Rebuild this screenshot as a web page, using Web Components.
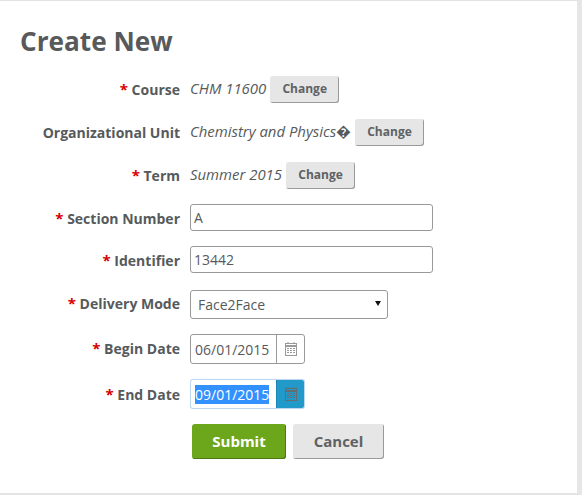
<!DOCTYPE html>
<html>
<head>
<meta charset="utf-8">
<title>Create New</title>
<style>
  html, body { margin: 0; padding: 0; background: #fff; }
  body { font-family: "Open Sans", "Liberation Sans", sans-serif; color: #565a5c; }
</style>
</head>
<body>
<create-page>
  <form-row label="Course" required style="--row-h:27px;--after:16px;--shift:-1px">
    <static-value>CHM 11600</static-value><plain-button>Change</plain-button>
  </form-row>
  <form-row label="Organizational Unit" style="--row-h:27px;--after:16px">
    <static-value>Chemistry and Physics&#xFFFD;</static-value><plain-button>Change</plain-button>
  </form-row>
  <form-row label="Term" required style="--row-h:27px;--after:15px;--shift:-1px">
    <static-value>Summer 2015</static-value><plain-button>Change</plain-button>
  </form-row>
  <form-row label="Section Number" required style="--row-h:27px;--after:15px">
    <text-box value="A"></text-box>
  </form-row>
  <form-row label="Identifier" required style="--row-h:27px;--after:17px">
    <text-box value="13442"></text-box>
  </form-row>
  <form-row label="Delivery Mode" required style="--row-h:29px;--after:15px;--shift:-3px">
    <select-box value="Face2Face"></select-box>
  </form-row>
  <form-row label="Begin Date" required style="--row-h:30px;--after:15px;--shift:-2px">
    <date-box value="06/01/2015"></date-box>
  </form-row>
  <form-row label="End Date" required style="--row-h:30px;--after:15px;--shift:-1px">
    <date-box value="09/01/2015" active></date-box>
  </form-row>
  <form-row style="--row-h:35px;--after:0px">
    <action-button primary>Submit</action-button><action-button>Cancel</action-button>
  </form-row>
</create-page>

<script>
// page frame with the heading
class CreatePage extends HTMLElement {
  constructor() {
    super();
    this.attachShadow({ mode: "open" });
    this.shadowRoot.innerHTML = `
    <style>
      :host {
        display: block;
        box-sizing: border-box;
        width: 582px;
        height: 495px;
        border-top: 1px solid #e3e3e3;
        border-right: 5px solid #e6e6e6;
        border-bottom: 2px solid #e3e3e3;
        padding: 22px 0 0 20px;
      }
      h1 {
        margin: 0 0 17px;
        height: 36px;
        line-height: 36px;
        font-size: 26.2px;
        font-weight: 700;
        color: #58595b;
      }
    </style>
    <h1>Create New</h1>
    <slot></slot>`;
  }
}

// label on the left, whatever is slotted on the right
class FormRow extends HTMLElement {
  constructor() {
    super();
    this.attachShadow({ mode: "open" });
    const label = this.getAttribute("label") || "";
    const star = this.hasAttribute("required") ? `<span class="star">*</span> ` : "";
    this.shadowRoot.innerHTML = `
    <style>
      :host {
        display: flex;
        align-items: center;
        height: var(--row-h);
        margin-bottom: var(--after);
      }
      .label {
        width: 160px;
        margin: var(--shift, 0px) 10px 0 0;
        flex: none;
        text-align: right;
        font-size: 14px;
        font-weight: 700;
        white-space: nowrap;
        color: #565a5c;
      }
      .star { color: #d40000; font-size: 15px; }
      .value { display: flex; align-items: center; height: 100%; }
    </style>
    <div class="label">${star}${label}</div>
    <div class="value"><slot></slot></div>`;
  }
}

class StaticValue extends HTMLElement {
  constructor() {
    super();
    this.attachShadow({ mode: "open" });
    this.shadowRoot.innerHTML = `
    <style>
      :host {
        display: block;
        margin: -4px 4px 0 0;
        font-size: 14.9px;
        font-style: italic;
        white-space: nowrap;
        color: #565a5c;
      }
    </style>
    <slot></slot>`;
  }
}

class PlainButton extends HTMLElement {
  constructor() {
    super();
    this.attachShadow({ mode: "open" });
    this.shadowRoot.innerHTML = `
    <style>
      :host {
        display: flex;
        align-items: center;
        justify-content: center;
        box-sizing: border-box;
        width: 69px;
        height: 27px;
        padding-bottom: 2px;
        background: #e6e6e6;
        border-radius: 3px;
        box-shadow: inset -1px -1px 0 #9a9a9a;
        font-size: 12px;
        font-weight: 700;
        color: #5f6264;
      }
    </style>
    <slot></slot>`;
  }
}

class TextBox extends HTMLElement {
  constructor() {
    super();
    this.attachShadow({ mode: "open" });
    this.shadowRoot.innerHTML = `
    <style>
      :host { display: block; width: 243px; height: 27px; }
      input {
        box-sizing: border-box;
        width: 100%;
        height: 100%;
        margin: 0;
        padding: 0 3px;
        border: 1px solid #999;
        border-radius: 3px;
        background: #fff;
        font: 14px "Open Sans", "Liberation Sans", sans-serif;
        color: #565a5c;
        outline: none;
      }
    </style>
    <input type="text" value="${this.getAttribute("value") || ""}">`;
  }
}

class SelectBox extends HTMLElement {
  constructor() {
    super();
    this.attachShadow({ mode: "open" });
    this.shadowRoot.innerHTML = `
    <style>
      :host { display: block; position: relative; width: 198px; height: 29px; }
      select {
        appearance: none;
        box-sizing: border-box;
        width: 100%;
        height: 100%;
        margin: 0;
        padding: 0 0 0 7px;
        border: 1px solid #999;
        border-radius: 3px;
        background: #fff;
        font: 14px "Open Sans", "Liberation Sans", sans-serif;
        color: #565a5c;
        outline: none;
      }
      svg { position: absolute; right: 7px; top: 11px; pointer-events: none; }
    </style>
    <select><option>${this.getAttribute("value") || ""}</option></select>
    <svg width="6" height="5" viewBox="0 0 6 5"><path d="M0 0h6L3 5z" fill="#111"/></svg>`;
  }
}

class DateBox extends HTMLElement {
  constructor() {
    super();
    this.attachShadow({ mode: "open" });
    this.shadowRoot.innerHTML = `
    <style>
      :host { display: flex; box-sizing: border-box; width: 115px; height: 30px; border: 1px solid #999; border-radius: 3px; overflow: hidden; background: #fff; }
      :host([active]) { border-color: #bcd7f2; box-shadow: 0 0 1px #cfe3f7; }
      .field { flex: 1; display: flex; align-items: center; padding-left: 4px; min-width: 0; }
      .text { font-size: 14px; line-height: 19px; white-space: nowrap; color: #565a5c; }
      :host([active]) .text { background: #3390ff; color: #fff; }
      .btn { flex: none; width: 27px; display: flex; align-items: center; justify-content: center; border-left: 1px solid #999; }
      :host([active]) .btn { background: #2199c9; border-left-color: #1c86b2; }
      svg { display: block; }
      :host([active]) svg { opacity: .75; }
      :host([active]) svg * { stroke: #7b5f55; }
    </style>
    <div class="field"><span class="text">${this.getAttribute("value") || ""}</span></div>
    <div class="btn">
      <svg width="12" height="14" viewBox="0 0 12 14" fill="none" stroke="#9a9a9a">
        <rect x="0.5" y="1.5" width="11" height="12"/>
        <path d="M0.5 4h11" stroke-width="2"/>
        <path d="M3 0v2M9 0v2"/>
        <path d="M2 6.5h8M2 8.5h8M2 10.5h8" stroke-dasharray="2 1"/>
      </svg>
    </div>`;
  }
}

class ActionButton extends HTMLElement {
  constructor() {
    super();
    this.attachShadow({ mode: "open" });
    this.shadowRoot.innerHTML = `
    <style>
      :host {
        display: flex;
        align-items: center;
        justify-content: center;
        box-sizing: border-box;
        width: 91px;
        height: 35px;
        padding-bottom: 2px;
        margin-right: 7px;
        background: #e6e6e6;
        border-radius: 3px;
        box-shadow: inset -1px -1px 0 #9a9a9a;
        font-size: 15px;
        font-weight: 700;
        color: #5f6264;
      }
      :host([primary]) {
        width: 94px;
        margin-left: 2px;
        background: #6ba61b;
        box-shadow: inset -1px -1px 0 #4b7a10;
        color: #fff;
      }
    </style>
    <slot></slot>`;
  }
}

customElements.define("create-page", CreatePage);
customElements.define("form-row", FormRow);
customElements.define("static-value", StaticValue);
customElements.define("plain-button", PlainButton);
customElements.define("text-box", TextBox);
customElements.define("select-box", SelectBox);
customElements.define("date-box", DateBox);
customElements.define("action-button", ActionButton);
</script>
</body>
</html>
